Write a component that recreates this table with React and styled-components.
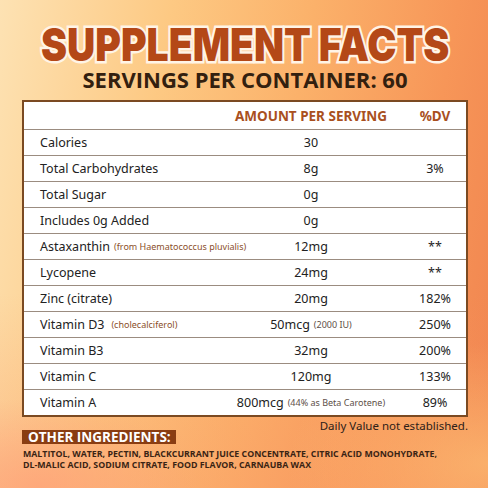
import React from "react";
import styled, { createGlobalStyle } from "styled-components";

const GlobalStyle = createGlobalStyle`
	html, body {
		margin: 0;
		padding: 0;
	}
	body {
		font-family: "Noto Sans", "Open Sans", sans-serif;
	}
`;

const Page = styled.div`
	width: 488px;
	height: 488px;
	overflow: hidden;
	box-sizing: border-box;
	padding: 21px 20px 0 22px;
	display: flex;
	flex-direction: column;
	background:
		radial-gradient(ellipse 160px 90px at 8% 100%, rgba(255, 160, 120, 0.7), transparent),
		radial-gradient(ellipse 200px 120px at 100% 95%, rgba(255, 200, 120, 0.6), transparent),
		linear-gradient(180deg, rgba(255, 240, 210, 0) 60%, rgba(250, 150, 100, 0.35) 100%),
		linear-gradient(100deg, #fde2b3 0%, #fdc983 30%, #fbb16a 55%, #f79658 80%, #f0834f 100%);
`;

const Title = styled.h1`
	margin: 0;
	height: 46px;
	display: flex;
	justify-content: center;
	align-items: center;
	font-family: Inter, "Noto Sans", sans-serif;
	font-weight: 900;
	font-size: 46px;
	line-height: 46px;
	white-space: nowrap;
	color: #b44817;
	-webkit-text-stroke: 5px #fff4e6;
	paint-order: stroke fill;

	span {
		display: inline-block;
		transform: scaleX(0.85);
	}
`;

const Subtitle = styled.h2`
	margin: 0 0 8px;
	text-align: center;
	font-family: "Open Sans", "Noto Sans", sans-serif;
	font-weight: 700;
	font-size: 22px;
	line-height: 25px;
	color: #33200f;
`;

const Table = styled.div`
	background: #fff;
	border: 2px solid #7b4a22;
	display: grid;
	grid-template-columns: minmax(0, 1fr) 150px 80px;
`;

const Cell = styled.div`
	height: 25px;
	display: flex;
	align-items: center;
	justify-content: ${(p) => (p.$left ? "flex-start" : "center")};
	padding-left: ${(p) => (p.$left ? "16px" : p.$dv ? "18px" : "0")};
	border-bottom: ${(p) => (p.$last ? "none" : "1px solid #9b8c80")};
	font-size: 12.5px;
	color: #222;
	white-space: nowrap;
`;

const HeadCell = styled(Cell)`
	height: 27px;
	font-weight: 700;
	font-size: 13.5px;
	color: #a9501e;
`;

const Note = styled.span`
	font-size: 9px;
	color: ${(p) => (p.$muted ? "#5e5048" : "#8b4f2a")};
	margin-left: ${(p) => p.$gap || 4}px;
`;

const Footnote = styled.div`
	text-align: right;
	font-size: 11.5px;
	color: #2d2018;
	margin-top: 1px;
	line-height: 16px;
`;

const Label = styled.div`
	align-self: flex-start;
	background: #8a3d12;
	color: #fff;
	font-family: "Open Sans", "Noto Sans", sans-serif;
	font-weight: 700;
	font-size: 13.5px;
	line-height: 14px;
	padding: 0 5px 0 6px;
	margin-top: -4px;
`;

const Ingredients = styled.p`
	margin: 5px 0 0 1px;
	font-family: "Open Sans", "Noto Sans", sans-serif;
	font-weight: 700;
	font-size: 8.8px;
	line-height: 11px;
	color: #3a2414;
	white-space: nowrap;
`;

const rows = [
	{ name: "Calories", amount: "30", dv: "" },
	{ name: "Total Carbohydrates", amount: "8g", dv: "3%" },
	{ name: "Total Sugar", amount: "0g", dv: "" },
	{ name: "Includes 0g Added", amount: "0g", dv: "" },
	{ name: "Astaxanthin", note: "(from Haematococcus pluvialis)", amount: "12mg", dv: "**" },
	{ name: "Lycopene", amount: "24mg", dv: "**" },
	{ name: "Zinc (citrate)", amount: "20mg", dv: "182%" },
	{ name: "Vitamin D3", note: "(cholecalciferol)", gap: 7, amount: "50mcg", amountNote: "(2000 IU)", dv: "250%" },
	{ name: "Vitamin B3", amount: "32mg", dv: "200%" },
	{ name: "Vitamin C", amount: "120mg", dv: "133%" },
	{ name: "Vitamin A", amount: "800mcg", amountNote: "(44% as Beta Carotene)", dv: "89%" },
];

function App() {
	return (
		<Page>
			<GlobalStyle />
			<Title>
				<span>SUPPLEMENT FACTS</span>
			</Title>
			<Subtitle>SERVINGS PER CONTAINER: 60</Subtitle>
			<Table>
				<HeadCell $left />
				<HeadCell>AMOUNT PER SERVING</HeadCell>
				<HeadCell $dv>%DV</HeadCell>
				{rows.map((r, i) => {
					const last = i === rows.length - 1;
					return (
						<React.Fragment key={r.name}>
							<Cell $left $last={last}>
								{r.name}
								{r.note && <Note $gap={r.gap}>{r.note}</Note>}
							</Cell>
							<Cell $last={last}>
								{r.amount}
								{r.amountNote && <Note $muted>{r.amountNote}</Note>}
							</Cell>
							<Cell $dv $last={last}>
								{r.dv}
							</Cell>
						</React.Fragment>
					);
				})}
			</Table>
			<Footnote>Daily Value not established.</Footnote>
			<Label>OTHER INGREDIENTS:</Label>
			<Ingredients>
				MALTITOL, WATER, PECTIN, BLACKCURRANT JUICE CONCENTRATE, CITRIC ACID MONOHYDRATE,
				<br />
				DL-MALIC ACID, SODIUM CITRATE, FOOD FLAVOR, CARNAUBA WAX
			</Ingredients>
		</Page>
	);
}

export default App;
